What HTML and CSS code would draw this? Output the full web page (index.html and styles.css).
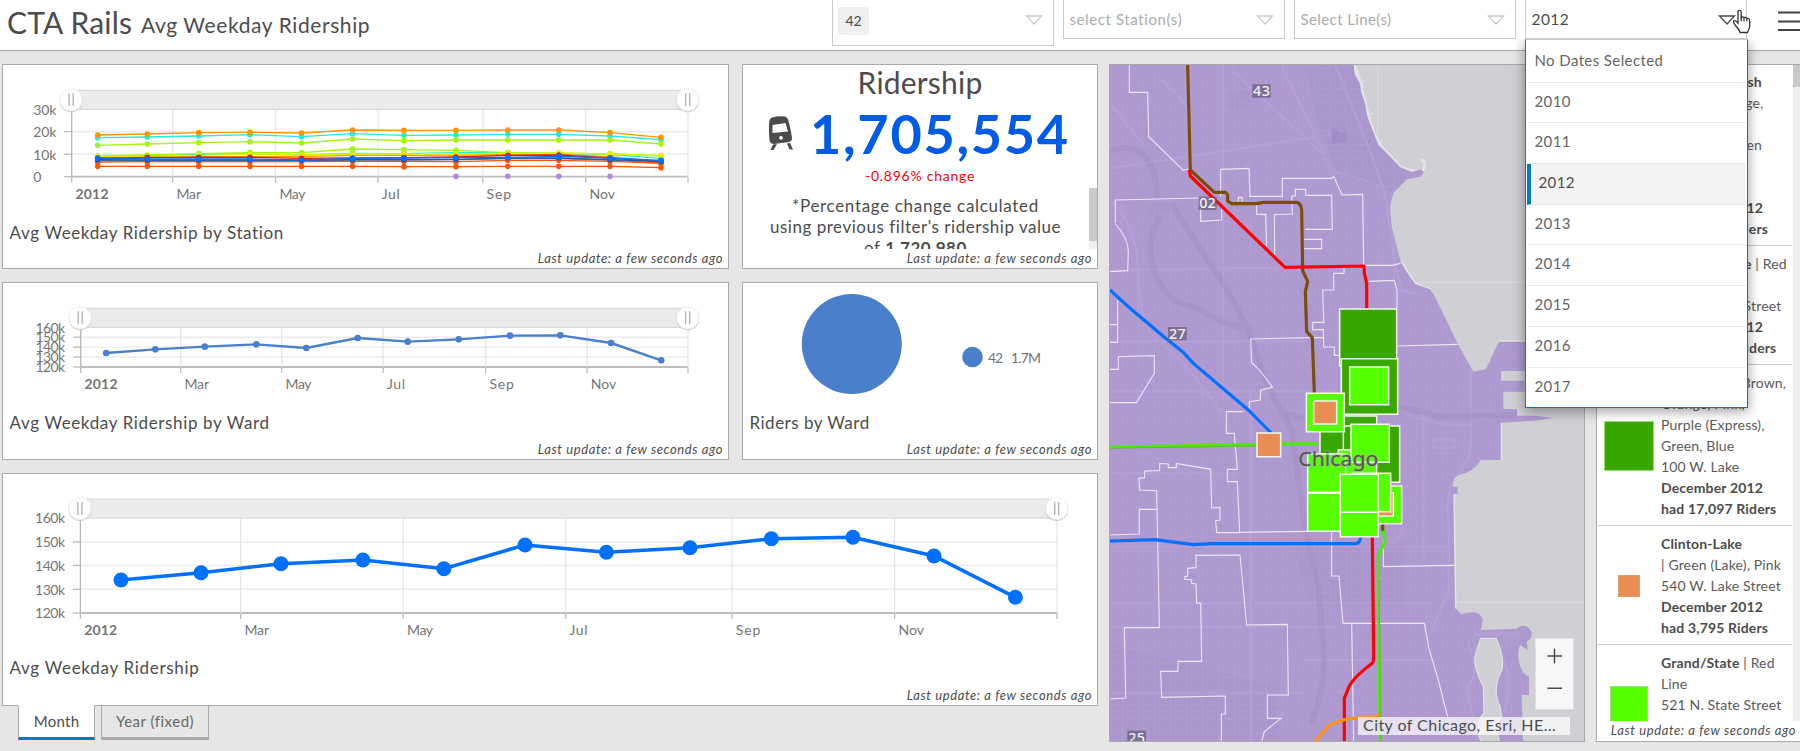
FILE: index.html
```html
<!DOCTYPE html>
<html lang="en">
<head>
<meta charset="utf-8">
<title>CTA Rails</title>
<link rel="stylesheet" href="styles.css">
</head>
<body>
<header class="header">
  <h1 class="brand">CTA Rails</h1>
  <span class="subtitle">Avg Weekday Ridership</span>
  <div class="filters">
    <div class="select select-ward"><span class="chip">42</span><svg class="arrow" viewBox="0 0 18 10"><path d="M1.5 1H16.5L9 9Z"/></svg></div>
    <div class="select"><span class="ph">select Station(s)</span><svg class="arrow" viewBox="0 0 18 10"><path d="M1.5 1H16.5L9 9Z"/></svg></div>
    <div class="select"><span class="ph ph-line">Select Line(s)</span><svg class="arrow" viewBox="0 0 18 10"><path d="M1.5 1H16.5L9 9Z"/></svg></div>
    <div class="select select-date"><span class="value">2012</span><svg class="arrow dark" viewBox="0 0 18 10"><path d="M1.5 1H16.5L9 9Z"/></svg>
      <ul class="menu">
        <li>No Dates Selected</li><li>2010</li><li>2011</li><li class="active">2012</li><li>2013</li><li>2014</li><li>2015</li><li>2016</li><li>2017</li>
      </ul>
      <svg class="cursor" viewBox="0 0 19 25"><path d="M6 14V3.200Q6 1.300 7.600 1.300T9.200 3.200V8.500Q10.500 7.200 12 8.600Q13.800 7.800 14.800 9.500Q17.700 9 17.700 12V17Q17.500 20 15.500 23.500H8.200Q6.600 20 3.500 16.500Q.6 13 2 11.800Q3.500 10.800 6 14Z" fill="#fff" stroke="#333" stroke-width="1.300"/><path d="M9.200 8.500V12.500M12 8.600V12.500M14.800 9.500V12.500" stroke="#333" stroke-width="1.200"/></svg>
    </div>
  </div>
  <svg class="burger" viewBox="0 0 22 20"><path d="M0 1.500H22M0 10.500H22M0 19H22"/></svg>
</header>
<main class="board">
  <section class="left">
    <div class="row">
      <article class="panel"><svg class="chart" id="chart-station" width="726" height="156" viewBox="3 65 726 156"></svg><h2 class="title">Avg Weekday Ridership by Station</h2><p class="update">Last update: a few seconds ago</p></article>
      <article class="panel">
        <div class="kpi">
          <h3 class="kpi-head">Ridership</h3>
          <div class="kpi-row">
            <svg class="train" viewBox="0 0 24 34"><path fill="#4c4c4c" fill-rule="evenodd" d="M3 1.500Q10-.5 16 .5Q18.300 1 19.500 5Q22 14 23 22Q23 25.500 20 26L5 28Q1 28 .5 24Q-.5 14 .3 5Q.8 2.300 3 1.500ZM3.500 9V17L19 15.500L16.500 7ZM12 20a1.900 1.900 0 1 0 .1 0ZM4 28.500L8 28L4.500 34H1.500ZM18 27.500L21 27L24 33.500H20.500Z"/></svg>
            <span class="kpi-num">1,705,554</span>
          </div>
          <p class="kpi-change">-0.896% change</p>
          <p class="kpi-note"><span class="n1">*Percentage change calculated</span><br><span class="n2">using previous filter's ridership value</span><br><span class="n3">of <b>1,720,980</b></span></p>
          <span class="kpi-scroll"></span>
        </div>
        <p class="update">Last update: a few seconds ago</p>
      </article>
    </div>
    <div class="row row-mid">
      <article class="panel"><svg class="chart" id="chart-ward" width="726" height="128" viewBox="3 283 726 128"></svg><h2 class="title">Avg Weekday Ridership by Ward</h2><p class="update">Last update: a few seconds ago</p></article>
      <article class="panel">
        <svg class="chart" width="354" height="128" viewBox="743 283 354 128"><circle cx="851.800" cy="344" r="50" fill="#4a80cb"/><circle cx="972.500" cy="357" r="10.300" fill="#4a80cb"/><text x="988" y="363" textLength="15" class="tick">42</text><text x="1011" y="363" textLength="30" class="tick">1.7M</text></svg>
        <h2 class="title t-pie">Riders by Ward</h2><p class="update">Last update: a few seconds ago</p>
      </article>
    </div>
    <article class="panel panel-main"><svg class="chart" id="chart-total" width="1094" height="182" viewBox="3 474 1094 182"></svg><h2 class="title t-total">Avg Weekday Ridership</h2><p class="update">Last update: a few seconds ago</p></article>
    <nav class="tabs"><a class="tab on">Month</a><a class="tab year">Year (fixed)</a></nav>
  </section>

  <section class="map">
    <svg width="474" height="676" viewBox="15 15 1422 2028">
      <defs>
        <pattern id="grid" width="96" height="84" patternUnits="userSpaceOnUse"><path d="M0 3H96M0 45H96M4 0V84M52 0V84" stroke="#b9a5dc" stroke-width="4" opacity=".28"/><path d="M0 24H96M0 66H96M20 0V84M36 0V84M68 0V84M84 0V84" stroke="#b9a5dc" stroke-width="2" opacity=".25"/></pattern>
        <clipPath id="landclip"><path id="landshape" d="M0 0H745L748 45L765 70L768 95L780 130L785 165L800 205L820 255L850 285L885 322L920 336L950 328L956 338L945 350L905 358L865 398L855 440L860 500L887 605L905 635L930 672L975 688L990 710L1060 855L1105 935L1143 928L1165 880L1182 845H1437V933H1188V962H1258V995H1195V1047H1236V1067H1290L1345 1074L1290 1082L1187 1088V1200H1127Q1110 1235 1060 1246Q1043 1255 1043 1280H1058V1302H1045L1050 1645L1070 1663Q1125 1645 1133 1680L1128 1710L1235 1706Q1258 1685 1280 1715Q1284 1735 1265 1745L1268 1770L1245 1755Q1230 1790 1255 1840L1272 1850V1905H1250L1255 2060H0Z"/></clipPath>
      </defs>
      <rect x="15" y="15" width="1422" height="2034" fill="#d0cfd4"/>
      <path d="M818 0V250M930 667H1437M1050 1627H1437" stroke="#dddce0" stroke-width="3"/>
      <g class="shore"><path d="M748 15L768 70L775 110L788 155L800 205L825 255L885 320Q945 345 958 325Q965 300 945 300M887 605L930 672L975 688M1187 1090V1200M1045 1302L1050 1645M1182 845H1437"/><path d="M770 70l8-8M775 122l14-4M788 170l14-12M800 215l5-18M820 258l12-20"/></g>
      <use href="#landshape" fill="#ad98cf"/>
      <g clip-path="url(#landclip)">
        <path d="M600 15H745L800 205L930 340L865 400L700 340L640 200Z" fill="#a695cc" opacity=".65"/>
        <path d="M370 95H440V145H370ZM130 430H195V470H130ZM0 1750L520 1880V2049H0ZM560 1450H900V1640H620Z" fill="#a592c9" opacity=".3"/>
        <rect x="0" y="0" width="1437" height="2049" fill="url(#grid)"/>
        <g class="road"><path d="M355 15V1020M437 1000V2049M15 630L600 622L887 610M15 325L700 220M160 50L250 140M530 15L680 330L740 350L830 380M690 15L790 260L840 400L870 610L890 690L960 710M15 845H600M15 995H700M15 1240H400M15 1630H990M15 1700H700M880 1050Q980 1100 1100 1095M1098 900V1150Q1100 1200 1045 1260Q1020 1300 1032 1400V1600Q980 1690 985 1720M15 420Q100 500 100 650T170 850T350 1060M15 130L120 260M380 30L650 280M15 1900H600M955 1050V1500M15 1460H1030M600 1800H1000M985 1140H1048V1165H985ZM850 1450Q930 1420 860 1350M1110 1722L1250 1720M1090 1750Q1130 1850 1085 1880Q1110 2000 1120 2049M1195 1800Q1230 1880 1190 1980"/></g>
        <g class="river"><path d="M15 275Q85 245 125 295Q160 345 155 420M200 430L300 590L360 680L400 750Q440 830 480 960L560 1110L600 1400L640 1580L655 1760Q665 1860 620 1990M165 470Q120 540 145 625Q180 730 270 740Q360 800 440 805"/><path d="M540 1060Q640 1100 720 1050Q860 1020 1000 1070L1240 1065"/></g>
      </g>
      <path d="M680 200l30 20l15-10v35l-45 5Z" fill="#a38dc6"/>
      <path d="M1127 1735H1173Q1200 1795 1190 1830Q1160 1890 1185 1940L1190 1970Q1165 1985 1185 2049H1130Q1105 1990 1137 1960L1135 1880Q1105 1820 1110 1790Q1118 1760 1127 1735Z" fill="#d0cfd4" class="lagoon"/>
      <g class="ward"><path d="M73 15V97H128L131 230L235 331L250 327M347 411V328L432 325L435 409H532V355H680L686 349L711 405L773 403L776 616M31 490V420L285 414M287 445V484L350 480V448M31 492Q70 535 70 575L68 632L15 635M455 435V463H482L485 560M509 590L508 464L562 462L560 408H571V388H602V406H680L682 508H600M598 538H650V566H598M400 425V412H411V425M776 616H862L887 610M790 664L868 661L876 690V745M717 622V640H686V690H653L656 787H623V809H655L656 861H688V886H705V920M437 837L655 832M437 837L440 908Q475 940 502 982L467 990L466 1020L433 1025V1048M877 858L1058 853M15 794H38M38 720V847H15M15 928H40V890L148 887V940L94 1028H15M364 1055V1120H388L397 1228H367V1265H397L404 1417M364 1055H415M404 1417L608 1414M680 1417V1548H702L714 1690H958L972 1765L1000 1860L1029 1975M740 1690L746 2045M835 1420V1520L1048 1516M15 1425L103 1422V1348H157M164 1232L119 1233V1253L102 1255L104 1290L155 1292L163 1703H58L62 1914L15 1917M164 1233V1210L190 1212V1223H214V1210L317 1228L320 1344L345 1342V1380L332 1382L335 1418H404M273 1523V1486L405 1485L425 1695L547 1693L550 1905H487V1975H528L478 2015L470 2045M273 1523L248 1525V1548L239 1550V1558L260 1560V1570L273 1572L275 1628L287 1630L290 1804H219V1834H167L170 1912L361 1908V1962H349V2045"/></g>
      <g class="ln">
        <path stroke="#4cea06" d="M15 1161L640 1151M833 1400L840 1445L820 1490V1640L826 2049"/>
        <path stroke="#5f9e30" opacity=".5" class="thin" d="M15 1165L450 1158M822 1560L828 2049"/>
        <path stroke="#0070ff" d="M15 690L70 740L180 833L235 877L265 910L430 1050L500 1120M15 1443L150 1439L265 1454L320 1451H750Q766 1451 767 1430"/>
        <path stroke="#7a4d08" d="M248 15L256 330L328 397H362L368 405V423L380 431H455L475 427H575Q589 430 590 450L593 632L608 665L601 695L605 815L622 833L628 1000M833 1390V1412"/>
        <path stroke="#ff0000" d="M253 330L256 348L540 622L777 618L778 640L785 670V748M802 1430L806 1790L804 1808Q740 1855 730 1885L718 1915V2049"/>
        <path stroke="#ff9215" d="M630 2046L670 1998Q690 1985 735 1976L815 1972L822 1960"/>
      </g>
      <g class="sq">
        <path class="dg" d="M704 747H875V918H704Z"/><path class="dg" d="M709 896H878V1063H709Z"/><path class="lg" d="M734 921H851V1034H734Z"/>
        <path class="dg" d="M715 1068H815V1200H715Z"/><path class="dg" d="M710 1098H884V1267H710Z"/><path class="dg" d="M645 1110H715V1182H645Z"/>
        <path class="lg" d="M604 1000H718V1115H604Z"/><path class="or" d="M626 1023H695V1092H626Z"/>
        <path class="or" d="M456 1119H527V1190H456Z"/>
        <path class="lg" d="M700 1169H815V1285H700Z"/><path class="lg" d="M608 1182H722V1297H608Z"/><path class="lg" d="M608 1300H722V1414H608Z"/>
        <path class="lg" d="M738 1093H853V1207H738Z"/><path class="lg" d="M775 1278H890V1391H775Z"/><path class="or" d="M798 1298H865V1368H798Z"/><path class="lg" d="M742 1240H857V1355H742Z"/>
        <path class="lg" d="M706 1316H820V1430H706Z"/><path class="lg" d="M706 1243H820V1357H706Z"/>
      </g>
      <g class="wl"><rect x="442" y="73" width="55" height="40"/><text x="444" y="108" textLength="51">43</text><rect x="281" y="410" width="54" height="40"/><text x="283" y="445" textLength="49">02</text><rect x="189" y="801" width="56" height="40"/><text x="192" y="837" textLength="50">27</text><rect x="67" y="2012" width="56" height="36"/><text x="70" y="2048" textLength="50">25</text></g>
      <text class="city" x="580" y="1217" textLength="240" lengthAdjust="spacingAndGlyphs">Chicago</text>
    </svg>
    <div class="zoom"><svg viewBox="0 0 39 72"><path d="M12 17H27.500M19.500 9V25M12 51H27.500" stroke="#4c4c4c" stroke-width="1.500"/></svg></div>
    <div class="attrib">City of Chicago, Esri, HE…</div>
  </section>

  <section class="list">
    <div class="scroller">
      <div class="item first"><i class="sw lime"></i><p><b>Adams/Wabash</b><br>| Green, Orange,<br>Pink, Purple<br>(Express), Green<br>Line, | Brown<br>130 S. State<br><b>December 2012</b><br><b>had 7,814 Riders</b></p></div>
      <div class="item"><i class="sw dgreen"></i><p><b>Chicago/State</b> | Red<br>Line<br>800 N. State Street<br><b>December 2012</b><br><b>had 14,328 Riders</b></p></div>
      <div class="item"><i class="sw dgreen"></i><p><b>Clark/Lake</b> | Brown,<br>Orange, Pink,<br>Purple (Express),<br>Green, Blue<br>100 W. Lake<br><b>December 2012</b><br><b>had 17,097 Riders</b></p></div>
      <div class="item"><i class="sw orange"></i><p><b>Clinton-Lake</b><br>| Green (Lake), Pink<br>540 W. Lake Street<br><b>December 2012</b><br><b>had 3,795 Riders</b></p></div>
      <div class="item"><i class="sw lime"></i><p><b>Grand/State</b> | Red<br>Line<br>521 N. State Street<br><b>December 2012</b><br><b>had 9,212 Riders</b></p></div>
      <span class="list-scroll"></span>
    </div>
    <p class="update">Last update: a few seconds ago</p>
  </section>
</main>
<script src="charts.js"></script>
</body>
</html>
```

FILE: styles.css
```css
* { box-sizing: border-box; }
body { margin: 0; width: 1800px; height: 751px; overflow: hidden; background: #e6e6e6; color: #4c4c4c; font-family: Lato, "Liberation Sans", sans-serif; }
h1, h2, h3, p, ul { margin: 0; padding: 0; font-weight: 400; }

.header { position: relative; z-index: 2; display: flex; height: 51px; background: #fff; border-bottom: 1px solid #a9a9a9; padding-left: 7px; }
.brand { width: 134px; font-size: 30px; line-height: 44px; letter-spacing: .2px; white-space: nowrap; }
.subtitle { width: 691px; font-size: 21px; line-height: 50px; letter-spacing: .6px; white-space: nowrap; }
.filters { display: flex; gap: 8.500px; align-items: flex-start; }
.select { position: relative; display: flex; justify-content: space-between; width: 222.500px; height: 39px; border: 1px solid #cacaca; border-top: 0; background: #fff; padding: 0 10px 0 6px; font-size: 15px; line-height: 38px; }
.select-ward { width: 222px; height: 46px; padding-left: 5px; }
.chip { width: 31px; height: 28px; margin-top: 7px; border-radius: 3px; background: #efefef; text-align: center; font-size: 14px; line-height: 28px; }
.ph { color: #acacac; letter-spacing: .6px; }
.ph-line { letter-spacing: .4px; }
.value { letter-spacing: .4px; font-size: 15.500px; }
.arrow { width: 18px; height: 10px; margin-top: 15px; fill: none; stroke: #cacaca; stroke-width: 1.300; }
.arrow.dark { stroke: #4c4c4c; }
.cursor { position: absolute; left: 206px; top: 9px; width: 19px; height: 25px; fill: none; }
.menu { position: absolute; left: -1px; top: 39px; width: 223px; height: 369px; list-style: none; background: #fff; border: 1px solid #007ac2; box-shadow: 0 3px 12px rgba(0,0,0,.4); clip-path: inset(0 -16px -16px -16px); padding: 2px 1px 0; border-top: 1px solid #cacaca; }
.menu li { height: 40.700px; padding-left: 8px; line-height: 37px; font-size: 15px; letter-spacing: .4px; color: #666; border-bottom: 1px solid #ebebeb; }
.menu li:last-child { border-bottom: 0; }
.menu .active { background: #f3f3f3; border-left: 4px solid #007ac2; color: #4c4c4c; }
.burger { width: 22px; height: 20px; margin: 11px 0 0 auto; stroke: #444; stroke-width: 2.200; }

.board { display: grid; grid-template-columns: 1096px 476px 211px; column-gap: 11px; padding: 13px 0 0 2px; }
.row { display: grid; grid-template-columns: 727px 356px; gap: 13px; height: 205px; margin-bottom: 13px; }
.row-mid { height: 178px; }
.panel { display: flex; flex-direction: column; background: #fff; border: 1px solid #a9a9a9; min-width: 0; overflow: hidden; }
.panel-main { height: 233px; }
.chart { display: block; flex: none; }
.title { padding-left: 6.500px; font-size: 17px; line-height: 24px; letter-spacing: .63px; white-space: nowrap; }
.t-pie { letter-spacing: .5px; }
.t-total { letter-spacing: .7px; }
.update { margin-top: auto; padding: 0 5px 1px 0; text-align: right; font-style: italic; font-size: 13px; line-height: 18px; letter-spacing: .6px; white-space: nowrap; }
.tick { font-size: 14px; fill: #757575; }
.tick.b { font-weight: 700; }

.kpi { position: relative; height: 184px; overflow: hidden; text-align: center; }
.kpi-head { font-size: 30px; line-height: 34px; letter-spacing: .2px; }
.kpi-row { display: flex; align-items: center; gap: 17px; height: 60px; margin-top: 4px; padding-left: 26px; }
.train { width: 24px; height: 34px; flex: none; }
.kpi-num { font-size: 54px; line-height: 60px; padding-top: 2px; font-weight: 700; letter-spacing: 1.700px; color: #005ce6; }
.kpi-change { margin-top: 3px; font-size: 14px; line-height: 20px; letter-spacing: .75px; color: #f00; }
.kpi-note { margin: 9px 9px 0 0; font-size: 17px; line-height: 21px; letter-spacing: .53px; white-space: nowrap; }
.n1 { letter-spacing: .67px; }
.kpi-scroll { position: absolute; right: 0; top: 123px; width: 8px; height: 61px; background: linear-gradient(#c9c9c9 53px, #f0f0f0 53px); }

.tabs { display: flex; gap: 6px; padding-left: 16px; margin-top: -1px; }
.tab { height: 35px; width: 77px; border: 1px solid #a9a9a9; border-bottom-width: 3px; text-align: center; font-size: 15px; line-height: 31px; letter-spacing: .3px; }
.tab.on { background: #fff; border-top-color: #fff; border-bottom-color: #007ac2; }
.tab.year { width: 108px; color: #666; letter-spacing: .5px; }

.map { position: relative; height: 678px; border: 1px solid #a9a9a9; }
.map > svg { display: block; }
.shore path { fill: none; stroke: #e3e3e4; stroke-width: 9; }
.shore path + path { stroke-width: 4; }
.road path { fill: none; stroke: #b7a3da; stroke-width: 7; opacity: .6; }
.river path { fill: none; stroke: #a18bc4; stroke-width: 18; opacity: .45; }
.lagoon { stroke: #dfdee1; stroke-width: 4; }
.ward path { fill: none; stroke: #ebe7f1; stroke-width: 3.300; }
.ln path { fill: none; stroke-width: 9.500; stroke-linejoin: round; }
.ln .thin { stroke-width: 3; }
.sq path { stroke: #f4f7ec; stroke-width: 4.500; }
.dg { fill: #38a800; }
.lg { fill: #55ff00; }
.or { fill: #e98e52; }
.wl rect { fill: #655d75; opacity: .7; }
.wl text { font: 500 43px "Noto Sans", sans-serif; fill: #f2f2f2; }
.city { font: 58px "Noto Sans", sans-serif; fill: #55554f; stroke: #aaa; stroke-width: 5px; paint-order: stroke; stroke-opacity: .7; }
.zoom { position: absolute; left: 425px; top: 573px; width: 39px; height: 72px; background: #f7f7f7; border: 1px solid #e2e2e2; }
.zoom svg { display: block; width: 37px; height: 70px; }
.attrib { position: absolute; left: 248px; top: 652px; width: 212px; height: 18px; padding-left: 5px; background: rgba(255,255,255,.7); font-size: 16px; line-height: 16px; letter-spacing: .45px; white-space: nowrap; }

.list { display: flex; flex-direction: column; height: 678px; background: #fff; border: 1px solid #a9a9a9; }
.list .update { padding-right: 10px; padding-bottom: 2px; }
.scroller { position: relative; height: 657px; overflow: hidden; }
.item { display: flex; align-items: center; width: 194px; margin-left: 1px; border-bottom: 1px solid #cacaca; padding: 7px 0 6px; }
.item.first { padding-top: 6px; }
.item p { font-size: 14px; line-height: 21px; white-space: nowrap; letter-spacing: .15px; color: #5a5a5a; }
.item b { color: #4c4c4c; font-weight: 700; }
.sw { flex: none; border: 1px solid #9be070; }
.dgreen { width: 50px; height: 50px; margin: 0 7px 0 6px; background: #38a800; }
.orange { width: 22px; height: 22px; margin: 0 21px 0 20px; background: #e98e52; border-color: #dda070; }
.lime { width: 38px; height: 38px; margin: 0 13px 0 12px; background: #55ff00; }
.list-scroll { position: absolute; left: 196px; top: 0; width: 7px; height: 657px; background: linear-gradient(#c9c9c9 22px, #eee 22px); }
```

FILE: charts.js
```js
const NS = 'http://www.w3.org/2000/svg';

function add(parent, name, attrs, text) {
  const el = document.createElementNS(NS, name);
  for (const key in attrs) el.setAttribute(key, attrs[key]);
  if (text) el.textContent = text;
  parent.appendChild(el);
  return el;
}

// Draws the grid, axis labels, series and the range slider of one line chart.
function drawChart(id, c) {
  const svg = document.getElementById(id);
  const left = c.v[0], right = c.v[6];
  const top = c.h[0], bottom = c.h[c.h.length - 1];
  c.h.forEach((y, i) => {
    const base = i === c.h.length - 1;
    add(svg, 'path', { d: `M${left} ${y}H${right}`, stroke: base ? '#bdbdbd' : '#ebebeb', 'stroke-width': base ? 1.8 : 1.4 });
    if (i) add(svg, 'path', { d: `M${left - 7.5} ${y}H${left}`, stroke: '#bdbdbd', 'stroke-width': 1.4 });
    add(svg, 'text', { x: c.labelX, y: y + c.dy, textLength: c.lw[i], class: 'tick' }, c.labels[i]);
  });
  c.v.forEach((x, i) => {
    add(svg, 'path', { d: `M${x} ${top}V${bottom}`, stroke: i ? '#e6e6e6' : '#b5b5b5', 'stroke-width': 1.3 });
    add(svg, 'path', { d: `M${x} ${bottom}V${bottom + 6}`, stroke: '#bdbdbd', 'stroke-width': 1.3 });
    if (i < 6) add(svg, 'text', { x: x + 3.8, y: bottom + 22, class: i ? 'tick' : 'tick b', textLength: [33, 24.500, 26, 18, 24.500, 25.500][i] }, ['2012', 'Mar', 'May', 'Jul', 'Sep', 'Nov'][i]);
  });
  c.series.forEach(s => {
    const pts = s.y.map((y, i) => [c.x[i + (s.from || 0)], y]);
    if (!s.from) add(svg, 'polyline', { points: pts.join(' '), fill: 'none', stroke: s.color, 'stroke-width': c.w });
    pts.forEach(p => add(svg, 'circle', { cx: p[0], cy: p[1], r: c.r, fill: s.color }));
  });
  add(svg, 'rect', { x: left, y: top - 19, width: right - left, height: 19, fill: '#ebebeb' });
  add(svg, 'path', { d: `M${left} ${top - 19}H${right}M${left} ${top}H${right}`, stroke: '#dadada', 'stroke-width': 1.2 });
  [left - .5, right - .3].forEach(x => {
    const y = top - 9.5;
    add(svg, 'circle', { cx: x, cy: y + 1, r: 11.6, fill: '#bcbcbc', opacity: .6 });
    add(svg, 'circle', { cx: x, cy: y, r: 11.2, fill: '#fff', stroke: '#e4e4e4', 'stroke-width': .6 });
    add(svg, 'path', { d: `M${x - 2} ${y - 6.500}v13M${x + 2} ${y - 6.500}v13`, stroke: '#b0b0b0', 'stroke-width': 1.3 });
  });
}

const third = list => list.map(v => v / 3);

drawChart('chart-station', {
  h: [109.3, 131.7, 154.3, 176.7], v: [71.7, 172.7, 275.6, 378, 482.8, 585.7, 688],
  labels: ['30k', '20k', '10k', '0'], labelX: 33.3, lw: [23, 23, 23, 7.5], dy: 5.7, w: 1.3, r: 2.8,
  x: [97.7, 147.3, 198.7, 250, 301.5, 352.6, 404, 456, 507.8, 558.8, 610, 661],
  series: [
    { color: '#1ff0d5', y: third([413, 411, 408, 404, 410, 401, 406, 405, 403, 403, 408, 419]) },
    { color: '#ff9500', y: third([405, 402, 398, 397, 399, 390, 391, 391, 390, 390, 398, 412]) },
    { color: '#a5f50a', y: third([436, 432, 428, 425, 429, 417, 422, 420, 420, 420, 420, 432]) },
    { color: '#1ff0d5', y: third([470, 467, 463, 462, 465, 460, 461, 458, 458, 460, 464, 475]) },
    { color: '#a5f50a', y: third([468, 465, 461, 458, 458, 447, 449, 451, 458, 460, 461, 468]) },
    { color: '#ff9500', y: third([473, 470, 470, 470, 470, 466, 466, 465, 463, 463, 470, 486]) },
    { color: '#e8ee00', y: third([470, 470, 466, 463, 465, 462, 462, 462, 460, 459, 462, 467]) },
    { color: '#f01010', y: third([475, 472, 472, 472, 475, 474, 473, 471, 466, 465, 474, 486]) },
    { color: '#666f80', y: third([482, 482, 482, 482, 483, 480, 480, 479, 476, 476, 480, 490]) },
    { color: '#ff5500', y: third([486, 485, 485, 485, 485, 484, 484, 485, 481, 481, 484, 489]) },
    { color: '#2455b0', y: third([479, 480, 480, 480, 481, 479, 479, 478, 474, 474, 479, 484]) },
    { color: '#0070ff', y: third([474, 477, 477, 477, 480, 475, 474, 473, 472, 469, 474, 481]) },
    { color: '#ff5500', y: third([499, 499, 499, 499, 499, 499, 500, 500, 499, 499, 499, 503]) },
    { color: '#b28adb', from: 7, y: third([529, 529, 529, 529]) }
  ]
});

drawChart('chart-ward', {
  h: [327.3, 337.2, 347.1, 357, 367], v: [80.7, 180.7, 281.7, 383.2, 485.6, 587, 688],
  labels: ['160k', '150k', '140k', '130k', '120k'], labelX: 35.5, lw: [29.5, 29.5, 29.5, 29.5, 29.5], dy: 5.2, w: 2.4, r: 3.3,
  x: [106.2, 155.3, 204.8, 256.3, 306.3, 357.7, 407.7, 458.7, 510, 560.2, 611.1, 661.2],
  series: [{ color: '#4a80cb', y: third([234, 223, 215, 208, 219, 189, 200, 193, 182, 181, 204, 256]).map(v => v + 275) }]
});

drawChart('chart-total', {
  h: [518, 542, 565.5, 589.3, 613], v: [80.4, 240.7, 403.2, 565.7, 732, 894.6, 1057],
  labels: ['160k', '150k', '140k', '130k', '120k'], labelX: 35, lw: [30, 30, 30, 30, 30], dy: 5.3, w: 3.6, r: 7.5,
  x: [121, 201, 281, 362.9, 443.9, 525, 606.4, 690, 771.4, 852.9, 934, 1015.4],
  series: [{ color: '#0070ff', y: [580, 572.7, 563.7, 560, 568.7, 545, 552.3, 547.7, 538.7, 537.3, 556, 597.3] }]
});
```
